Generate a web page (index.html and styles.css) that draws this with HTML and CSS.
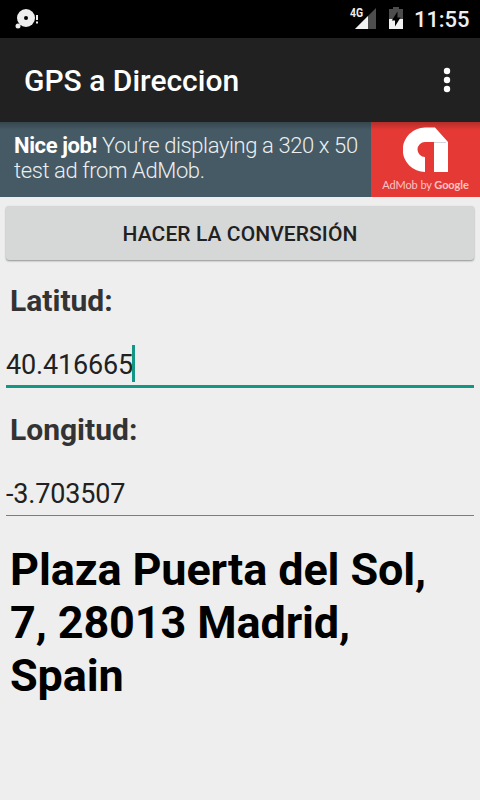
FILE: index.html
```html
<!DOCTYPE html>
<html lang="es">
<head>
<meta charset="utf-8">
<title>GPS a Direccion</title>
<link rel="stylesheet" href="styles.css">
</head>
<body>
<div class="status">
  <svg class="notice" width="26" height="24" viewBox="0 0 26 24"><circle cx="12" cy="10" r="9" fill="#eee"/><circle cx="12" cy="10" r="2" fill="#000"/><circle cx="4" cy="18" r="2.500" fill="#eee"/><path d="M22 7h2v5h-2zM22 13.500h2v2h-2z" fill="#eee"/></svg>
  <span class="network">4G</span>
  <svg class="signal" width="21" height="21" viewBox="0 0 21 21"><path d="M21 0V21H0z" fill="#4d4d4d"/><path d="M13 8V21H0z" fill="#f2f2f2"/></svg>
  <svg class="battery" width="14" height="22" viewBox="0 0 14 22"><path d="M4 0h6v2h4v10H0V2h4z" fill="#4d4d4d"/><path d="M0 12h14v10H0z" fill="#f2f2f2"/><path d="M8.500 4.500v6H11.500L6 19.500v-6H2.800z" fill="#000"/></svg>
  <span class="clock">11:55</span>
</div>
<header class="toolbar">
  <h1 class="title">GPS a Direccion</h1>
  <svg class="more" width="8" height="26" viewBox="0 0 8 26"><g fill="#fff"><circle cx="4" cy="4" r="3.200"/><circle cx="4" cy="13" r="3.200"/><circle cx="4" cy="22" r="3.200"/></g></svg>
</header>
<section class="ad">
  <p class="ad-copy"><b>Nice job!</b> You’re displaying a 320 x 50<br>test ad from AdMob.</p>
  <div class="ad-brand">
    <svg class="ad-logo" width="46" height="46" viewBox="0 0 46 46"><path d="M22 0.500H32L45 15V45H31V15H22a7.500 7.500 0 0 0 0 15V45A22.250 22.250 0 0 1 22 0.500z" fill="#fff"/><path d="M31 15.500H43" stroke="#d5d5dc" stroke-width="1"/></svg>
    <span class="ad-by">AdMob by <b>Google</b></span>
  </div>
</section>
<main class="form">
  <button class="convert">HACER LA CONVERSIÓN</button>
  <div class="label">Latitud:</div>
  <div class="field focused"><span>40.416665</span><i class="caret"></i></div>
  <div class="label second">Longitud:</div>
  <div class="field"><span>-3.703507</span></div>
  <p class="address">Plaza Puerta del Sol,<br>7, 28013 Madrid,<br>Spain</p>
</main>
</body>
</html>
```
FILE: styles.css
```css
* { box-sizing: border-box; }
body {
  margin: 0;
  width: 480px;
  height: 800px;
  overflow: hidden;
  background: #eee;
  color: #212121;
  font-family: Roboto, "Liberation Sans", sans-serif;
}
.status {
  display: flex;
  height: 38px;
  padding: 8px 12px 0 14px;
  background: #000;
  color: #eee;
}
.notice { margin-right: auto; }
.network {
  margin: -2px -11px 0 0;
  font: 700 13px/14px Roboto, sans-serif;
  transform: scaleX(.8);
  transform-origin: left;
}
.signal { margin-right: 13px; }
.battery { margin-right: 11px; margin-top: -1px; }
.clock { font-size: 22px; line-height: 24px; font-weight: 500; letter-spacing: -.1px; width: 54px; white-space: nowrap; }
.toolbar {
  display: flex;
  align-items: center;
  justify-content: space-between;
  height: 84px;
  padding: 0 29px 0 24px;
  background: #212121;
  color: #fff;
}
.title { margin: 2px 0 0; font-size: 30px; line-height: 36px; font-weight: 500; white-space: nowrap; }
.ad {
  display: flex;
  height: 75px;
  background: linear-gradient(rgba(0,0,0,.22), transparent 8px), linear-gradient(90deg, #455a64 371px, #e53935 371px);
}
.ad-copy {
  width: 371px;
  margin: 0;
  padding: 11px 0 0 14px;
  color: #eceff1;
  font-size: 22px;
  letter-spacing: -.39px;
  line-height: 25px;
  font-weight: 300;
  white-space: nowrap;
}
.ad-copy b { color: #fff; font-weight: 700; }
.ad-brand {
  flex: 1;
  display: flex;
  flex-direction: column;
  align-items: center;
  padding-top: 5px;
}
.ad-by { margin-top: 5px; color: #f9c5c3; font: 400 11px/13px Lato, sans-serif; letter-spacing: -.1px; white-space: nowrap; }
.ad-by b { font-weight: 700; }
.form { display: flex; flex-direction: column; padding: 9px 6px 0; }
.convert {
  height: 54px;
  padding: 2px 0 0;
  border: 0;
  border-radius: 3px;
  background: #d6d7d7;
  box-shadow: 0 1px 2px rgba(0,0,0,.4);
  color: #212121;
  font: 500 21px/25px Roboto, sans-serif;
  letter-spacing: .08px;
}
.label {
  margin-top: 23px;
  padding-left: 4px;
  color: #333;
  font-size: 30px;
  line-height: 35px;
  font-weight: 700;
}
.field {
  display: flex;
  height: 42px;
  margin-top: 27px;
  border-bottom: 1.5px solid #7d7d7d;
  font-size: 27px;
  letter-spacing: -.17px;
  line-height: 40px;
}
.focused { height: 43px; border-bottom: 3px solid #149685; }
.caret { width: 3px; height: 37px; background: #149685; margin-left: -1px; }
.label.second { margin-top: 24px; }
.address {
  margin: 27px 0 0 4px;
  color: #000;
  font-size: 45px;
  letter-spacing: -.12px;
  line-height: 53px;
  font-weight: 700;
  white-space: nowrap;
}
```
